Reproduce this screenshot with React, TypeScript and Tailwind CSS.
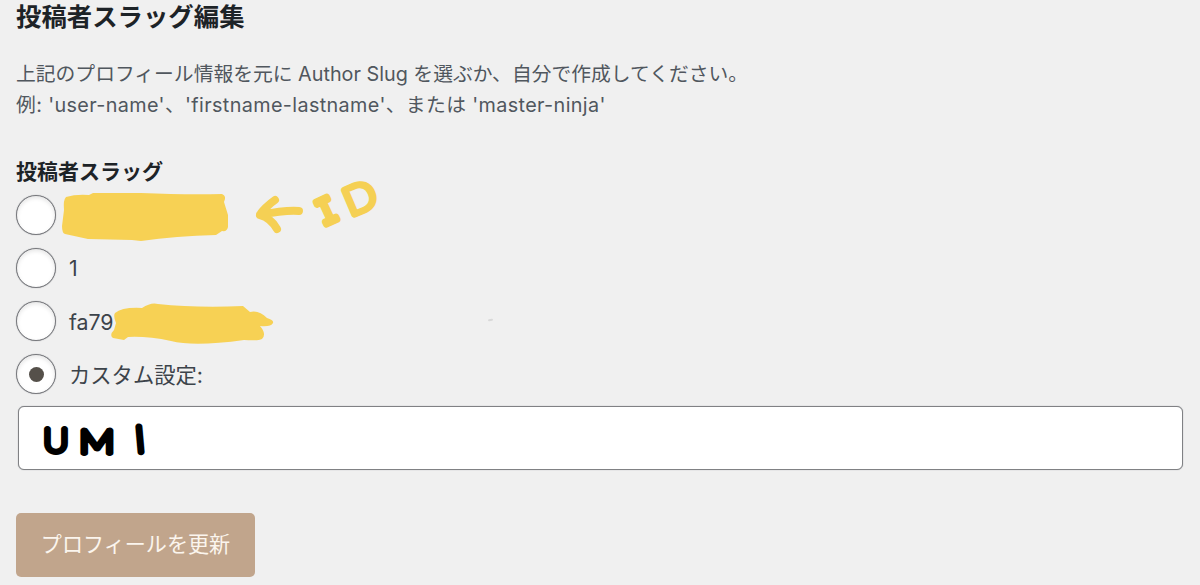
import React from "react";

interface SlugOptionProps {
  checked?: boolean;
  label: string;
  children?: React.ReactNode;
}

const SlugOption: React.FC<SlugOptionProps> = ({ checked = false, label, children }) => {
  return (
    <label className="relative flex h-10 items-center">
      <input type="radio" name="author-slug" defaultChecked={checked} className="peer sr-only" />
      <span className="flex h-10 w-10 shrink-0 items-center justify-center rounded-full border border-[#77787c] bg-white shadow-[inset_0_2px_4px_rgba(0,0,0,0.1),0_0_1px_#8c8f94]">
        {checked && <span className="h-[15px] w-[15px] rounded-full bg-[#55504a]" />}
      </span>
      <span className="ml-[13px] mt-[3px] whitespace-pre text-[21.3px] text-[#3c434a]">{label}</span>
      {children}
    </label>
  );
};

// Marker note next to the first slug
const IdNote: React.FC = () => {
  return (
    <svg className="absolute left-[232px] top-[-29px]" width="140" height="80" viewBox="0 0 140 80" fill="none" stroke="#f5d054" strokeLinecap="round" strokeLinejoin="round">
      <path d="M51 45 C40 44 27 46 12 49 M27 34 C21 38 13 46 12 49 C20 51 25 56 29 63" strokeWidth="8" />
      <g fill="#f5d054" textAnchor="middle">
        <text transform="translate(84 56) rotate(-25) scale(0.92 1.08)" strokeWidth="6" className="font-['Liberation_Mono',monospace] text-[35px]">I</text>
        <text transform="translate(117 44) rotate(-23) scale(1.1 1)" strokeWidth="6.5" className="font-['Lato',sans-serif] text-[38px] font-thin">D</text>
      </g>
    </svg>
  );
};

const Handwriting: React.FC = () => {
  return (
    <svg className="block" width="140" height="60" viewBox="0 0 140 60" fill="#000" stroke="#000" strokeWidth="6" strokeLinecap="round" strokeLinejoin="round" textAnchor="middle">
      <g className="font-['Lato',sans-serif] text-[32px] font-thin">
        <text transform="translate(37 45) scale(1.08 1)">U</text>
        <text transform="translate(78 45.5) scale(1.22 1)">M</text>
        <text transform="translate(122 45) rotate(-5) scale(1.1 1.12)">I</text>
      </g>
    </svg>
  );
};

const App: React.FC = () => {
  return (
    <main className="relative h-[585px] w-full overflow-hidden bg-[#f0f0f0] pl-4 font-['Inter','Noto_Sans_CJK_JP',sans-serif]" lang="ja">
      <h2 className="h-[34px] text-[25.4px] font-bold leading-[34px] text-[#1d2327]">投稿者スラッグ編集</h2>
      <p className="mt-[25px] text-[19.8px] leading-[30.5px] text-[#50575e]">
        上記のプロフィール情報を元に Author Slug を選ぶか、自分で作成してください。
        <br />
        <span className="tracking-[0.37px]">例: 'user-name'、'firstname-lastname'、または 'master-ninja'</span>
      </p>

      <h3 className="mt-[37px] h-[30px] text-[21px] font-bold leading-[30px] text-[#1d2327]">投稿者スラッグ</h3>
      <div className="mt-[7.5px] flex flex-col gap-[13.3px]">
        <SlugOption label="">
          <svg className="absolute left-[42px] top-[-5px]" width="175" height="55" viewBox="0 0 175 55" fill="#f7d154">
            <path d="M8 7 Q18 4 31 5 L35 3 L83 3 Q129 5 164 4 Q169 6 166 12 L170 25 L170 37 Q169 42 164 41 L158 45 Q118 46 83 51 L74 50 L30 49 L7 44 Q4 43 4 36 L6 20 Q5 10 8 7Z" />
          </svg>
          <IdNote />
        </SlugOption>
        <SlugOption label="1" />
        <SlugOption label="fa79">
          <svg className="absolute left-[92px] top-[0px]" width="170" height="50" viewBox="0 0 170 50" fill="#f7d154">
            <path d="M7 12 Q14 6 34 7 Q43 1 50 3 Q88 7 135 5 L142 11 Q151 9 159 17 Q166 19 165 22 Q163 26 152 25 Q159 33 154 38 Q150 40 136 39 Q86 46 63 40 Q39 35 20 36 L16 39 L5 37 Q1 34 6 29 L8 22 Q5 15 7 12Z" />
          </svg>
          <span className="absolute left-[472px] top-[18px] h-0.5 w-[5px] -rotate-12 rounded-full bg-[#d9d9d9]" />
        </SlugOption>
        <SlugOption label="カスタム設定:" checked />
      </div>

      <div className="ml-0.5 mt-[11.6px] h-[64px] w-[1165px] rounded-md border border-[#808184] bg-white shadow-[0_0_1px_#8c8f94]">
        <Handwriting />
      </div>

      <button className="mt-[43px] block h-16 w-[239px] rounded-[5px] bg-[#c1a58c] pb-px text-[21.1px] text-[#fbf5ee]">プロフィールを更新</button>
    </main>
  );
};

export default App;
